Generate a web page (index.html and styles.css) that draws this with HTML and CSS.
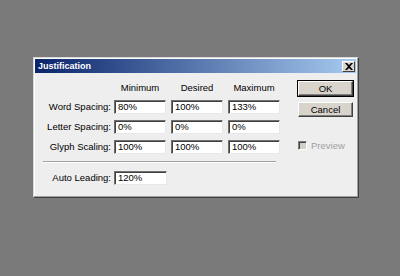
FILE: index.html
```html
<!DOCTYPE html>
<html>
<head>
<meta charset="utf-8">
<link rel="stylesheet" href="styles.css">
</head>
<body>
<div class="dialog">
  <div class="titlebar">
    <span class="title">Justification</span>
    <span class="close"><svg width="8" height="7" viewBox="0 0 8 7"><path d="M0 0h2l2 2 2-2h2L5 3.5 8 7H6L4 5 2 7H0l3-3.5z" fill="#000"/></svg></span>
  </div>
  <div class="content">
    <div class="main">
      <div class="grid top">
        <span></span>
        <span class="head">Minimum</span>
        <span class="head">Desired</span>
        <span class="head">Maximum</span>

        <span class="label">Word Spacing:</span>
        <span class="field">80%</span>
        <span class="field">100%</span>
        <span class="field">133%</span>

        <span class="label">Letter Spacing:</span>
        <span class="field">0%</span>
        <span class="field">0%</span>
        <span class="field">0%</span>

        <span class="label">Glyph Scaling:</span>
        <span class="field">100%</span>
        <span class="field">100%</span>
        <span class="field">100%</span>
      </div>
      <div class="sep"></div>
      <div class="grid auto">
        <span class="label">Auto Leading:</span>
        <span class="field">120%</span>
      </div>
    </div>
    <div class="side">
      <button class="btn default">OK</button>
      <button class="btn">Cancel</button>
      <label class="check"><span class="box"></span><span class="ctext">Preview</span></label>
    </div>
  </div>
</div>
</body>
</html>
```

FILE: styles.css
```css
html, body {
  margin: 0;
  padding: 0;
}
body {
  background: #7a7a7a;
  width: 400px;
  height: 276px;
  overflow: hidden;
  font-family: "Liberation Sans", Arial, sans-serif;
  font-size: 9.5px;
  color: #000;
}
.dialog {
  margin: 57px 0 0 33px;
  width: 326px;
  height: 141px;
  box-sizing: border-box;
  background: #eeeeee;
  border: 1px solid #d8d8d8;
  border-right-color: #404040;
  border-bottom-color: #404040;
  box-shadow: inset -1px -1px 0 #a0a0a0, inset 1px 1px 0 #ffffff;
  padding: 1px 2px 0 1px;
  display: flex;
  flex-direction: column;
}
.titlebar {
  height: 14px;
  background: linear-gradient(to right, #0a246a, #a6caf0);
  display: flex;
  align-items: center;
  justify-content: space-between;
  padding: 0 1px 0 3px;
}
.title {
  color: #fff;
  font-weight: bold;
  font-size: 9px;
}
.close {
  width: 13px;
  height: 11px;
  box-sizing: border-box;
  background: #d8d4cc;
  border: 1px solid;
  border-color: #fff #404040 #404040 #fff;
  display: flex;
  align-items: center;
  justify-content: center;
}
.content {
  display: flex;
  padding: 10px 0 0 0;
}
.main {
  width: 246px;
  padding-left: 8px;
}
.grid {
  display: grid;
  grid-template-columns: 66px 52px 52px 52px;
  column-gap: 5px;
  row-gap: 6px;
  grid-auto-rows: 14px;
}
.top {
  grid-template-rows: 12px;
  margin-top: -1px;
}
.head {
  text-align: center;
  line-height: 12px;
}
.label {
  text-align: right;
  line-height: 14px;
  margin-right: -2px;
}
.field {
  box-sizing: border-box;
  background: #fff;
  border: 1px solid;
  border-color: #707070 #e8e8e8 #e8e8e8 #707070;
  box-shadow: inset 1px 1px 0 #404040;
  padding: 0 0 0 3px;
  line-height: 12px;
}
.sep {
  margin: 7px 0 8px 0;
  height: 1px;
  border-top: 1px solid #a0a0a0;
  background: #fff;
  width: 233px;
}
.auto {
  grid-template-columns: 66px 53px;
}
.side {
  margin-left: 9px;
  display: flex;
  flex-direction: column;
  margin-top: -2px;
}
.btn {
  width: 55px;
  height: 15px;
  padding: 0;
  font-family: inherit;
  font-size: 9.5px;
  color: #000;
  background: #d8d4cc;
  border: 1px solid;
  border-color: #fff #404040 #404040 #fff;
  box-shadow: inset -1px -1px 0 #808080;
  margin-bottom: 6px;
}
.btn.default {
  outline: 1px solid #000;
}
.check {
  margin-top: 17px;
  display: flex;
  align-items: center;
  gap: 4px;
}
.box {
  width: 9px;
  height: 9px;
  box-sizing: border-box;
  background: #d4d0c8;
  border: 1px solid;
  border-color: #808080 #fff #fff #808080;
  box-shadow: inset 1px 1px 0 #404040;
}
.ctext {
  color: #a0a0a0;
}
```
